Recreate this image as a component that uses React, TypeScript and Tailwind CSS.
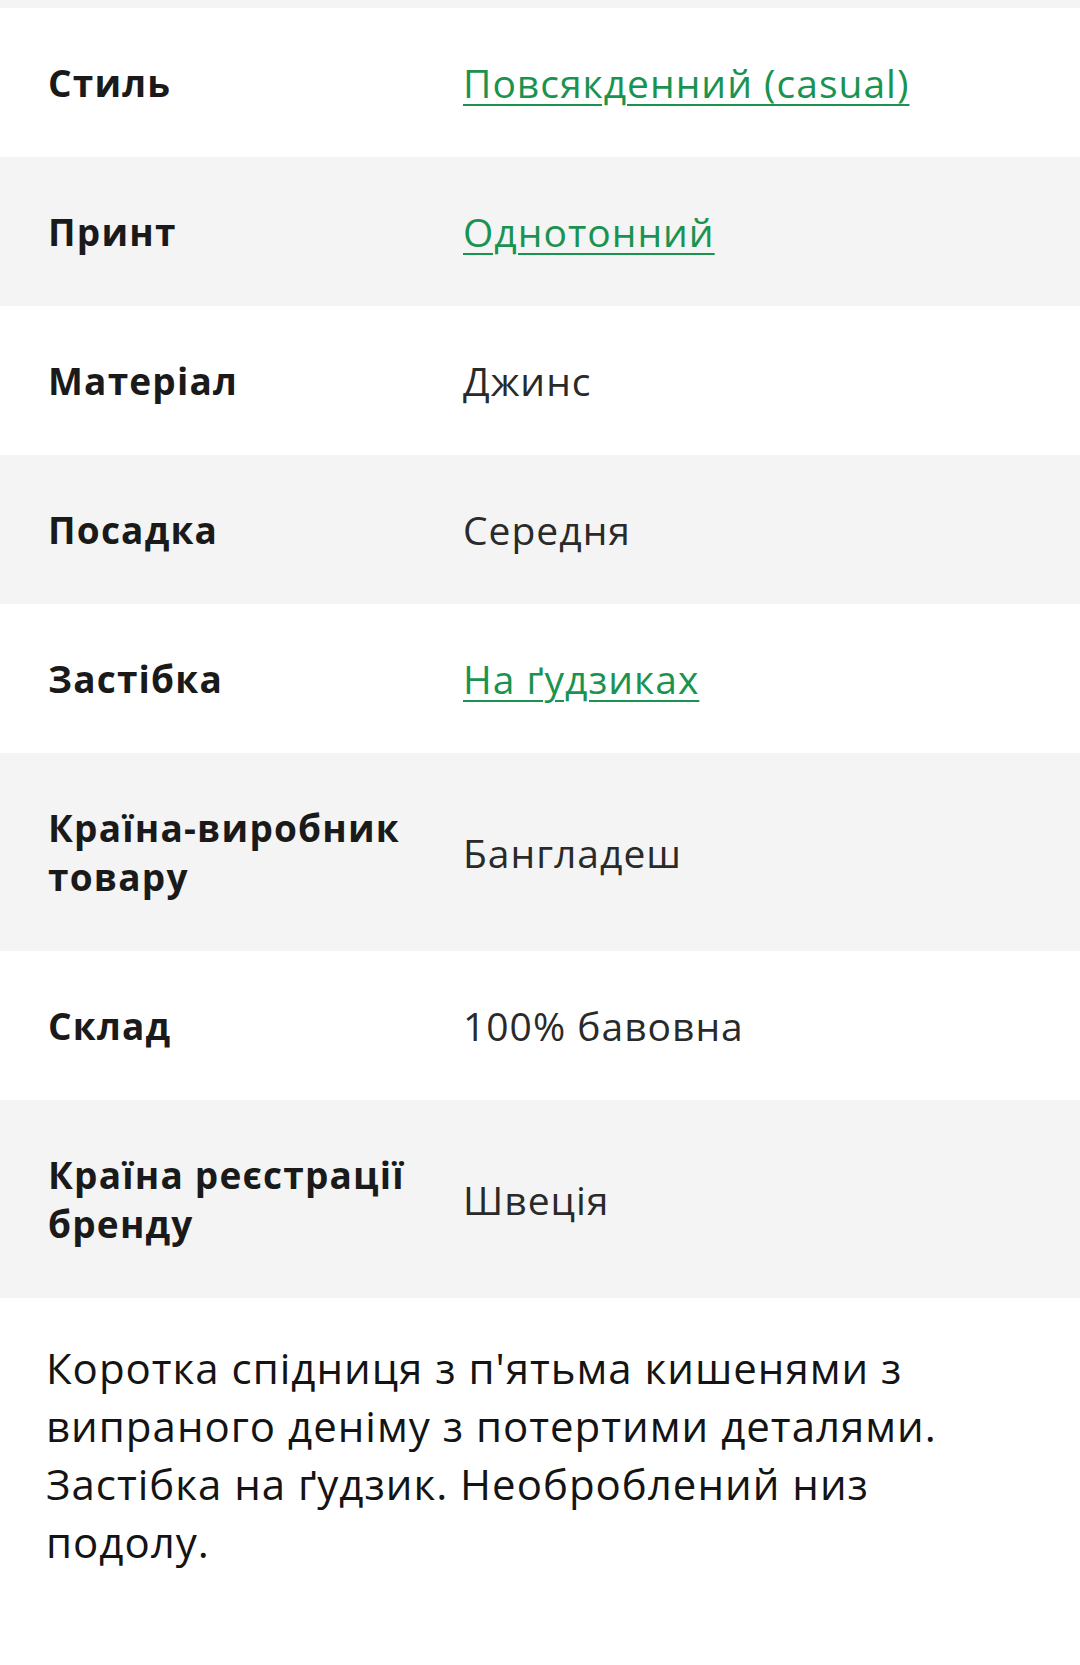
const rows: { label: string; value: string; link?: boolean }[] = [
  { label: 'Стиль', value: 'Повсякденний (casual)', link: true },
  { label: 'Принт', value: 'Однотонний', link: true },
  { label: 'Матеріал', value: 'Джинс' },
  { label: 'Посадка', value: 'Середня' },
  { label: 'Застібка', value: 'На ґудзиках', link: true },
  { label: 'Країна-виробник товару', value: 'Бангладеш' },
  { label: 'Склад', value: '100% бавовна' },
  { label: 'Країна реєстрації бренду', value: 'Швеція' },
];

export default function App() {
  return (
    <main className="min-h-[1665px] w-[1080px] bg-white font-['Open_Sans','Liberation_Sans',sans-serif] text-[#1a1a1a]">
      <div className="h-[8px] bg-[#f4f4f4]" />

      {/* Таблиця характеристик */}
      <div>
        {rows.map((row, i) => (
          <div
            key={row.label}
            className={`grid grid-cols-[415px_1fr] items-center py-[50px] pl-[48px] pr-6 ${i % 2 === 1 ? 'bg-[#f4f4f4]' : 'bg-white'}`}
          >
            <div className="pr-1 text-[37px] font-bold leading-[49px] tracking-[1.2px]">{row.label}</div>
            <div className="text-[39px] leading-[49px] tracking-[1px]">
              {row.link ? (
                <a href="#" className="text-[#1b9350] underline decoration-2 underline-offset-[6px]">
                  {row.value}
                </a>
              ) : (
                <span className="text-[#2a2a2a]">{row.value}</span>
              )}
            </div>
          </div>
        ))}
      </div>

      {/* Опис */}
      <p className="px-[46px] pt-[41px] text-[42px] leading-[58px] tracking-[1px] text-[#141414] max-w-[1000px]">
        Коротка спідниця з п'ятьма кишенями з випраного деніму з потертими деталями. Застібка на ґудзик. Необроблений низ подолу.
      </p>
    </main>
  );
}
